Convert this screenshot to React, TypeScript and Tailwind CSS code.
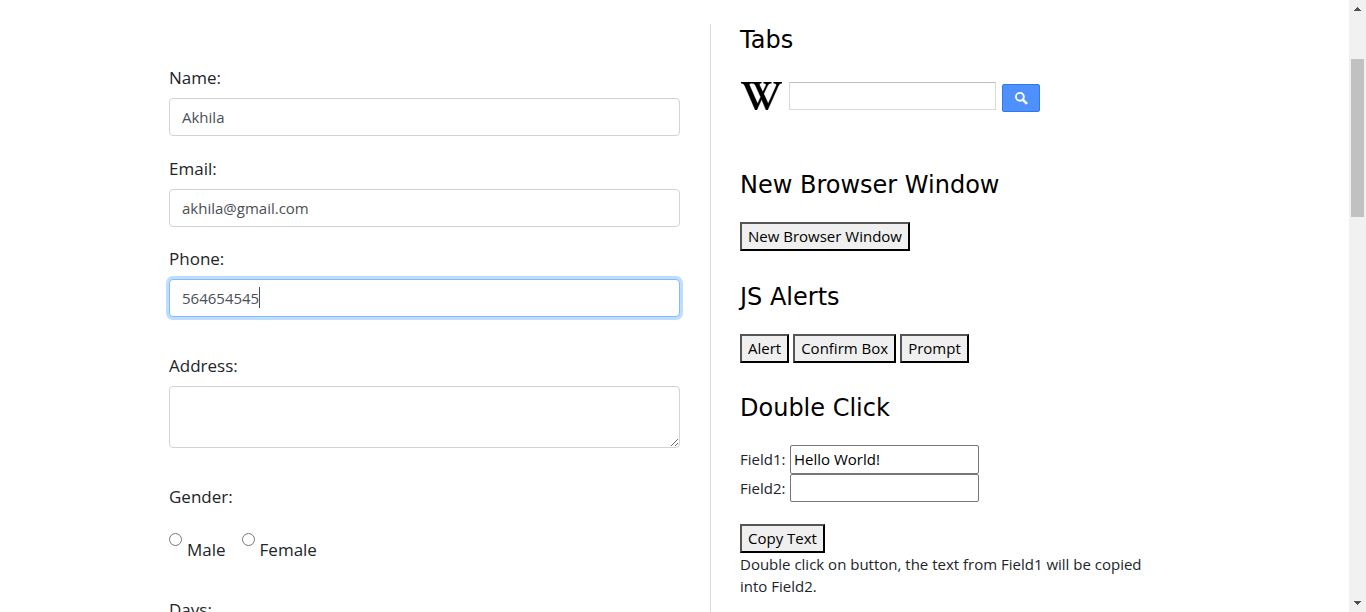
import type { ReactNode } from "react";

const labelClass = "block h-[27px] text-[17px] leading-[30px] text-[#212529]";
const fieldClass =
  "block h-[38px] w-full rounded border bg-white px-3 text-[15px] leading-6 text-[#495057] outline-none";

function Heading({ children }: { children: ReactNode }) {
  return (
    <h2 className="font-['DejaVu_Sans',sans-serif] text-2xl leading-[29px] text-black">
      {children}
    </h2>
  );
}

function PlainButton({ children }: { children: ReactNode }) {
  return (
    <button
      type="button"
      className="h-[29px] border-2 border-t-[#555] border-r-black border-b-black border-l-[#555] bg-[#efefef] px-1.5 pb-0.5 text-[15px] leading-[22px] whitespace-nowrap text-black"
    >
      {children}
    </button>
  );
}

function WikipediaMark() {
  return (
    <svg viewBox="0 0 41 28" className="h-7 w-[41px] shrink-0" role="img" aria-label="Wikipedia" fill="#000">
      <path d="M0 0H11V1.2C8.6 1.3 8 2 8.7 3.6L16.6 21.5L19.6 15L14.4 3.4C13.6 1.8 12.6 1.3 10.8 1.2V0H20.4V1.2C18.6 1.3 18.2 2 18.8 3.5L21.8 9.8L24.7 3.8C25.4 2.1 24.8 1.3 22.6 1.2V0H30.4V1.2C28.4 1.3 27.5 2 26.6 3.8L22.8 11.8L27.2 21.5L35 4C35.8 2.1 35 1.3 32.6 1.2V0H41V1.2C39.2 1.4 38.2 2.2 37.4 4L26.7 28H25L20.6 17.6L15.9 28H14.2L3.7 3.7C2.9 2 2.1 1.3 0 1.2Z" stroke="#000" strokeWidth=".3" />
    </svg>
  );
}

function Scrollbar() {
  return (
    <div aria-hidden="true" className="flex w-[17px] shrink-0 flex-col items-center justify-between bg-[#f1f1f1]">
      <div className="flex w-full flex-col items-center">
        <svg viewBox="0 0 7 4" className="mt-[7px] h-1 w-[7px]" fill="#505050" shapeRendering="crispEdges">
          <path d="M3 0h1v1h1v1h1v1h1v1H0V3h1V2h1V1h1z" />
        </svg>
        <div className="mt-12 h-[158px] w-[13px] bg-[#c1c1c1]" />
      </div>
      <svg viewBox="0 0 7 4" className="mb-[7px] h-1 w-[7px]" fill="#505050" shapeRendering="crispEdges">
        <path d="M0 0h7v1H6v1H5v1H4v1H3V3H2V2H1V1H0z" />
      </svg>
    </div>
  );
}

export default function App() {
  return (
    <div className="flex h-screen overflow-hidden bg-white font-['Open_Sans',sans-serif]">
      <div className="min-w-0 flex-1 overflow-hidden pt-6">
        <div className="mx-auto flex max-w-[1011px]">
          <form className="flex min-w-0 flex-1 flex-col pt-[39px] pr-[30px]">
            <div className="mb-[18px]">
              <label htmlFor="name" className={labelClass}>Name:</label>
              <input id="name" type="text" defaultValue="Akhila" className={`${fieldClass} mt-2 border-[#ced4da]`} />
            </div>
            <div className="mb-[17px]">
              <label htmlFor="email" className={labelClass}>Email:</label>
              <input id="email" type="text" defaultValue="akhila@gmail.com" className={`${fieldClass} mt-2 border-[#ced4da]`} />
            </div>
            <div className="mb-[34px]">
              <label htmlFor="phone" className={labelClass}>Phone:</label>
              <div className="relative mt-2">
                <input
                  id="phone"
                  type="text"
                  defaultValue="564654545"
                  className={`${fieldClass} border-[#80bdff] shadow-[0_0_0_3px_#bfdeff]`}
                />
                <span aria-hidden="true" className="absolute top-2 left-[90px] h-[21px] w-px bg-[#495057]" />
              </div>
            </div>
            <div className="mb-[34px]">
              <label htmlFor="address" className={labelClass}>Address:</label>
              <textarea
                id="address"
                className="mt-2 block h-[62px] w-full resize-y rounded border border-[#ced4da] bg-white px-3 py-1.5 text-[15px] text-[#495057] outline-none"
              />
            </div>
            <fieldset className="mb-[30px]">
              <legend className={labelClass}>Gender:</legend>
              <div className="mt-6 flex gap-4">
                <label className="flex items-start gap-[5px] text-[17px] leading-[30px] text-[#212529]">
                  <input type="radio" name="gender" className="m-0 h-[13px] w-[13px]" />
                  <span className="mt-0.5">Male</span>
                </label>
                <label className="flex items-start gap-[5px] text-[17px] leading-[30px] text-[#212529]">
                  <input type="radio" name="gender" className="m-0 h-[13px] w-[13px]" />
                  <span className="mt-0.5">Female</span>
                </label>
              </div>
            </fieldset>
            <p className={labelClass}>Days:</p>
          </form>

          <main className="w-[470px] shrink-0 border-l border-[#d8d8d8] pt-0.5 pl-[29px] text-[15px] text-[#212529]">
            <Heading>Tabs</Heading>
            <form className="mt-[27px] flex items-start">
              <a href="#wikipedia" className="ml-px">
                <WikipediaMark />
              </a>
              <input
                type="text"
                aria-label="Search Wikipedia"
                className="ml-[7px] h-7 w-[207px] border border-[#d9d9d9] border-t-[#c0c0c0] bg-white px-2 outline-none"
              />
              <button
                type="button"
                aria-label="Search"
                className="mt-0.5 ml-1.5 flex h-7 w-[38px] items-center justify-center rounded-xs border border-[#3079ed] bg-[#4d90fe]"
              >
                <svg viewBox="0 0 13 13" className="h-[13px] w-[13px]" fill="#fff">
                  <path d="M4.8 0a4.8 4.8 0 1 0 2.5 8.9l3.8 3.9 1.9-1.9-3.9-3.7A4.8 4.8 0 0 0 4.8 0zm0 1.8a3 3 0 1 1 0 6 3 3 0 0 1 0-6z" />
                </svg>
              </button>
            </form>

            <section className="mt-[59px]">
              <Heading>New Browser Window</Heading>
              <div className="mt-[22px] flex">
                <PlainButton>New Browser Window</PlainButton>
              </div>
            </section>

            <section className="mt-8">
              <Heading>JS Alerts</Heading>
              <div className="mt-[22px] flex gap-1">
                <PlainButton>Alert</PlainButton>
                <PlainButton>Confirm Box</PlainButton>
                <PlainButton>Prompt</PlainButton>
              </div>
            </section>

            <section className="mt-[31px]">
              <Heading>Double Click</Heading>
              <div className="mt-[22px] flex items-center gap-1">
                <label htmlFor="field1" className="w-[46px] whitespace-nowrap">Field1:</label>
                <input
                  id="field1"
                  type="text"
                  defaultValue="Hello World!"
                  className="h-[29px] w-[189px] rounded-xs border border-[#767676] bg-white px-[3px] pb-0.5 text-black outline-none"
                />
              </div>
              <div className="flex items-center gap-1">
                <label htmlFor="field2" className="w-[46px] whitespace-nowrap">Field2:</label>
                <input
                  id="field2"
                  type="text"
                  className="h-7 w-[189px] rounded-xs border border-[#767676] bg-white px-[3px] text-black outline-none"
                />
              </div>
              <div className="mt-[22px] flex">
                <PlainButton>Copy Text</PlainButton>
              </div>
              <p className="pr-5 leading-[22px]">
                Double click on button, the text from Field1 will be copied into Field2.
              </p>
            </section>
          </main>
        </div>
      </div>
      <Scrollbar />
    </div>
  );
}
